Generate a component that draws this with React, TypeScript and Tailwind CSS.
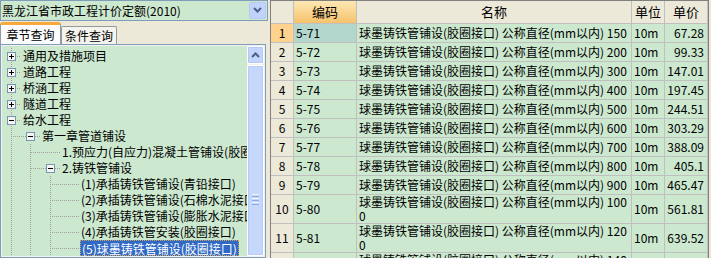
import React from 'react';

interface TreeRow {
  level: number;
  box?: '+' | '-';
  text: string;
  selected?: boolean;
}

interface QuotaRow {
  no: number;
  code: string;
  size: string;
  price: string;
}

const font = "font-['Noto_Sans_CJK_SC',sans-serif]";

const treeRows: TreeRow[] = [
  { level: 0, box: '+', text: '通用及措施项目' },
  { level: 0, box: '+', text: '道路工程' },
  { level: 0, box: '+', text: '桥涵工程' },
  { level: 0, box: '+', text: '隧道工程' },
  { level: 0, box: '-', text: '给水工程' },
  { level: 1, box: '-', text: '第一章管道铺设' },
  { level: 2, text: '1.预应力(自应力)混凝土管铺设(胶圈接口)' },
  { level: 2, box: '-', text: '2.铸铁管铺设' },
  { level: 3, text: '(1)承插铸铁管铺设(青铅接口)' },
  { level: 3, text: '(2)承插铸铁管铺设(石棉水泥接口)' },
  { level: 3, text: '(3)承插铸铁管铺设(膨胀水泥接口)' },
  { level: 3, text: '(4)承插铸铁管安装(胶圈接口)' },
  { level: 3, text: '(5)球墨铸铁管铺设(胶圈接口)', selected: true },
];

const rows: QuotaRow[] = [
  { no: 1, code: '5-71', size: '150', price: '67.28' },
  { no: 2, code: '5-72', size: '200', price: '99.33' },
  { no: 3, code: '5-73', size: '300', price: '147.01' },
  { no: 4, code: '5-74', size: '400', price: '197.45' },
  { no: 5, code: '5-75', size: '500', price: '244.51' },
  { no: 6, code: '5-76', size: '600', price: '303.29' },
  { no: 7, code: '5-77', size: '700', price: '388.09' },
  { no: 8, code: '5-78', size: '800', price: '405.1' },
  { no: 9, code: '5-79', size: '900', price: '465.47' },
  { no: 10, code: '5-80', size: '1000', price: '561.81' },
  { no: 11, code: '5-81', size: '1200', price: '639.52' },
  { no: 12, code: '5-82', size: '1400', price: '702.66' },
];

const NAME = '球墨铸铁管铺设(胶圈接口) 公称直径(mm以内) ';
const cx = [9, 28, 48, 67];

// dotted tree guide lines + expand box for one row
function Guides({ level, box }: { level: number; box?: '+' | '-' }) {
  const w = cx[level] + 10;
  return (
    <svg width={w} height={16} className="shrink-0">
      {cx.slice(0, level).map(x => (
        <line key={x} x1={x + 0.5} y1={0} x2={x + 0.5} y2={16} stroke="#a0a0a0" strokeDasharray="1 1" />
      ))}
      {level === 0 && <line x1={9.5} y1={0} x2={9.5} y2={16} stroke="#a0a0a0" strokeDasharray="1 1" />}
      <line x1={cx[level] - (level === 0 ? 0 : 19)} y1={8.5} x2={w} y2={8.5} stroke="#a0a0a0" strokeDasharray="1 1" />
      {box && (
        <g>
          <rect x={cx[level] - 4 + 0.5} y={4.5} width={8} height={8} fill="#f4f4f0" stroke="#7b93b3" />
          <line x1={cx[level] - 2} y1={8.5} x2={cx[level] + 3} y2={8.5} stroke="#000" />
          {box === '+' && <line x1={cx[level] + 0.5} y1={6} x2={cx[level] + 0.5} y2={11} stroke="#000" />}
        </g>
      )}
    </svg>
  );
}

function TreeItem({ row }: { row: TreeRow }) {
  return (
    <div className="flex h-[16px] items-center whitespace-nowrap">
      <Guides level={row.level} box={row.box} />
      <span
        className={
          'ml-[1px] h-[16px] px-[1px] text-[12px] leading-[15px] ' +
          (row.selected
            ? 'border border-dotted border-[#d6a35a] bg-[#316ac5] text-white'
            : 'text-black')
        }
      >
        {row.text}
      </span>
    </div>
  );
}

function ScrollBar() {
  return (
    <div className="flex w-[17px] shrink-0 flex-col bg-[#f3f1ec]">
      <div className="flex h-[18px] items-center justify-center rounded-[2px] border border-white bg-[#c3d5fd] shadow-[inset_0_0_0_1px_#b4c8f6]">
        <svg width="9" height="6" viewBox="0 0 9 6">
          <path d="M1 5 L4.5 1.5 L8 5" stroke="#4d6185" strokeWidth="2" fill="none" />
        </svg>
      </div>
      <div className="mt-[1px] flex flex-1 flex-col items-center rounded-[2px] border border-white bg-[#c6d7fc] pt-[128px] shadow-[inset_0_0_0_1px_#b8cbf7]">
        <div className="flex flex-col gap-[1px]">
          <div className="h-[1px] w-[7px] bg-[#eef4fe]" />
          <div className="h-[1px] w-[7px] bg-[#8faae8]" />
          <div className="h-[1px] w-[7px] bg-[#eef4fe]" />
          <div className="h-[1px] w-[7px] bg-[#8faae8]" />
          <div className="h-[1px] w-[7px] bg-[#eef4fe]" />
          <div className="h-[1px] w-[7px] bg-[#8faae8]" />
        </div>
      </div>
    </div>
  );
}

function LeftPanel() {
  return (
    <div className="flex w-[268px] shrink-0 flex-col">
      <div className="flex h-[21px] items-center border border-[#7f9db9] bg-[#cce8cf] pl-[1px] pr-[1px]">
        <span className="flex-1 text-[12px] leading-[15px] text-black">黑龙江省市政工程计价定额(2010)</span>
        <div className="flex h-[17px] w-[17px] items-center justify-center rounded-[2px] border border-[#b9c9ef] bg-[#c1d3fb]">
          <svg width="9" height="6" viewBox="0 0 9 6">
            <path d="M1 1 L4.5 4.5 L8 1" stroke="#4d6185" strokeWidth="2" fill="none" />
          </svg>
        </div>
      </div>
      <div className="mt-[1px] flex h-[22px] items-end">
        <div className="flex h-[22px] w-[61px] items-center justify-center rounded-t-[3px] border-x border-t-[3px] border-x-[#919b9c] border-t-[#f7a93a] bg-[#fcfcfe] text-[12px] leading-[15px]">
          章节查询
        </div>
        <div className="flex h-[18px] w-[56px] items-center justify-center rounded-t-[2px] border-x border-t border-[#919b9c] bg-[#f4f3ee] text-[12px] leading-[15px]">
          条件查询
        </div>
      </div>
      <div className="flex h-[215px] w-[266px] border border-[#7f9db9] bg-[#cce8cf]">
        <div className="flex flex-1 overflow-hidden border border-[#f0f0f0] bg-[#cce8cf]">
          <div className="flex min-w-0 flex-1 flex-col overflow-hidden pt-[2px]">
            {treeRows.map(r => (
              <TreeItem key={r.text} row={r} />
            ))}
          </div>
          <ScrollBar />
        </div>
      </div>
    </div>
  );
}

function Grid() {
  const cell = 'border-r border-b border-[#c0c0c0] text-[12px] leading-[14px] text-black';
  return (
    <div className="ml-[2px] h-[258px] w-[439px] shrink-0 overflow-hidden border-l border-t border-[#808080] bg-white">
      <div className="grid grid-cols-[23px_63px_275px_33px_43px] border-r border-[#808080]">
        <div className={cell + ' h-[23px] bg-[#ece9d8]'} />
        <div className={cell + ' flex h-[23px] items-center justify-center bg-gradient-to-b from-[#fde7b4] to-[#f6c36b] text-[13px]'}>编码</div>
        <div className={cell + ' flex h-[23px] items-center justify-center bg-[#ece9d8] text-[13px]'}>名称</div>
        <div className={cell + ' flex h-[23px] items-center justify-center bg-[#ece9d8] text-[13px]'}>单位</div>
        <div className={cell + ' flex h-[23px] items-center justify-center bg-[#ece9d8] text-[13px]'}>单价</div>
        {rows.map(r => {
          const tall = r.size.length > 3;
          const h = tall ? 'h-[29px]' : 'h-[19px]';
          return (
            <React.Fragment key={r.no}>
              <div className={cell + ' flex items-center justify-center ' + h + (r.no === 1 ? ' bg-[#ffd28d]' : ' bg-[#ece9d8]')}>
                {r.no}
              </div>
              <div className={cell + ' flex items-center pl-[2px] ' + h + (r.no === 1 ? ' bg-[#b4d7cd]' : ' bg-[#cce8cf]')}>
                {r.code}
              </div>
              {tall ? (
                <div className={cell + ' flex flex-col overflow-hidden whitespace-nowrap bg-[#cce8cf] pl-[2px] ' + h}>
                  <span className="block h-[14px] leading-[14px]">{NAME + r.size.slice(0, 3)}</span>
                  <span className="block h-[14px] leading-[14px]">{r.size.slice(3)}</span>
                </div>
              ) : (
                <div className={cell + ' flex items-center overflow-hidden whitespace-nowrap bg-[#cce8cf] pl-[2px] ' + h}>
                  {NAME + r.size}
                </div>
              )}
              <div className={cell + ' flex items-center bg-[#cce8cf] pl-[2px] ' + h}>10m</div>
              <div className={cell + ' flex items-center justify-end bg-[#cce8cf] pr-[3px] ' + h}>{r.price}</div>
            </React.Fragment>
          );
        })}
      </div>
    </div>
  );
}

export default function App() {
  return (
    <div className={'flex h-[258px] w-[711px] overflow-hidden bg-[#ece9d8] ' + font}>
      <LeftPanel />
      <Grid />
    </div>
  );
}
